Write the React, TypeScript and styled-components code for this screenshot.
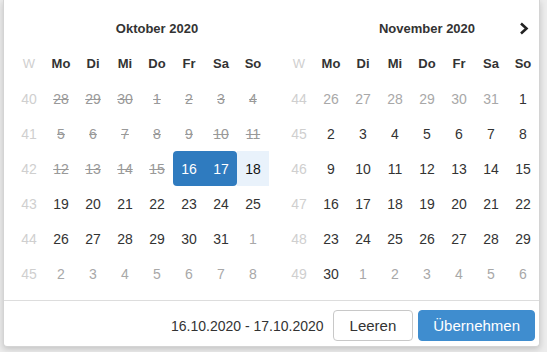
import React from "react";
import styled, { createGlobalStyle } from "styled-components";

const GlobalStyle = createGlobalStyle`
  html, body {
    margin: 0;
    padding: 0;
    background: #ececec;
    font-family: "Liberation Sans", Arial, sans-serif;
  }
`;

const Page = styled.div`
  width: 547px;
  height: 352px;
  overflow: hidden;
  padding-left: 3px;
  box-sizing: border-box;
`;

const Popup = styled.div`
  width: 537px;
  height: 347px;
  box-sizing: border-box;
  background: #fff;
  border: 1px solid #d4d4d4;
  border-top: none;
  border-radius: 0 0 4px 4px;
  box-shadow: 0 2px 6px rgba(0, 0, 0, 0.18);
  display: flex;
  flex-direction: column;
`;

const Calendars = styled.div`
  display: flex;
  gap: 14px;
  padding: 11px 0 9px 9px;
`;

const Month = styled.div`
  display: grid;
  grid-template-columns: repeat(8, 32px);
  grid-auto-rows: 35px;
`;

const TitleRow = styled.div`
  grid-column: 2 / span 7;
  display: flex;
  align-items: center;
  justify-content: center;
  position: relative;
  font-size: 13px;
  font-weight: bold;
  color: #333;
`;

const NextArrow = styled.span`
  position: absolute;
  right: 8px;
  top: 10px;
  width: 14px;
  height: 14px;
  display: flex;
  align-items: center;
  justify-content: center;
`;

const Head = styled.div<{ $week?: boolean }>`
  display: flex;
  align-items: center;
  justify-content: center;
  font-size: 13px;
  font-weight: ${(p) => (p.$week ? "normal" : "bold")};
  color: ${(p) => (p.$week ? "#cfcfcf" : "#333")};
`;

type Kind = "week" | "past" | "other" | "normal" | "start" | "end" | "hover";

const Cell = styled.div<{ $kind: Kind }>`
  display: flex;
  align-items: center;
  justify-content: center;
  font-size: 14px;
  color: ${(p) =>
    p.$kind === "week"
      ? "#cfcfcf"
      : p.$kind === "past"
      ? "#999"
      : p.$kind === "other"
      ? "#a8a8a8"
      : p.$kind === "start" || p.$kind === "end"
      ? "#fff"
      : p.$kind === "hover"
      ? "#111"
      : "#333"};
  text-decoration: ${(p) => (p.$kind === "past" ? "line-through" : "none")};
  background: ${(p) =>
    p.$kind === "start" || p.$kind === "end"
      ? "#2f7bbf"
      : p.$kind === "hover"
      ? "#e9f2fb"
      : "transparent"};
  border-radius: ${(p) =>
    p.$kind === "start" ? "4px 0 0 4px" : p.$kind === "end" ? "0 4px 4px 0" : "0"};
`;

const Footer = styled.div`
  border-top: 1px solid #ddd;
  display: flex;
  align-items: center;
  justify-content: flex-end;
  gap: 5px;
  padding: 9px 4px 4px 0;
`;

const RangeText = styled.span`
  font-size: 14px;
  color: #333;
  margin-right: 4px;
`;

const Button = styled.button<{ $primary?: boolean }>`
  height: 31px;
  box-sizing: border-box;
  padding: 0 ${(p) => (p.$primary ? "14px" : "16px")};
  font-family: "Liberation Sans", Arial, sans-serif;
  font-size: 15px;
  border-radius: 4px;
  border: 1px solid ${(p) => (p.$primary ? "#3f8dcf" : "#c8c8c8")};
  background: ${(p) => (p.$primary ? "#3f8dcf" : "#fff")};
  color: ${(p) => (p.$primary ? "#fff" : "#333")};
  cursor: pointer;
`;

const dayNames = ["Mo", "Di", "Mi", "Do", "Fr", "Sa", "So"];

type MonthData = {
  title: string;
  year: number;
  month: number;
  firstWeek: number;
  next?: boolean;
};

function buildDays(year: number, month: number) {
  const first = new Date(year, month, 1);
  const offset = (first.getDay() + 6) % 7;
  const days: Date[] = [];
  for (let i = 0; i < 42; i++) {
    days.push(new Date(year, month, 1 - offset + i));
  }
  return days;
}

function kindOf(d: Date, month: number): Kind {
  const y = d.getFullYear();
  const m = d.getMonth();
  const day = d.getDate();
  if (y === 2020 && m === 9 && day === 16) return "start";
  if (y === 2020 && m === 9 && day === 17) return "end";
  if (y === 2020 && m === 9 && day === 18 && month === 9) return "hover";
  if (m !== month) {
    if (y === 2020 && (m < 9 || (m === 9 && day < 16))) return "past";
    return "other";
  }
  if (y === 2020 && m === 9 && day < 16) return "past";
  return "normal";
}

function MonthView({ data }: { data: MonthData }) {
  const days = buildDays(data.year, data.month);
  const rows = [0, 1, 2, 3, 4, 5];
  return (
    <Month>
      <TitleRow>
        {data.title}
        {data.next && (
          <NextArrow>
            <svg width="10" height="13" viewBox="0 0 10 13">
              <path d="M2 1.5 L7.5 6.5 L2 11.5" fill="none" stroke="#222" strokeWidth="2.6" />
            </svg>
          </NextArrow>
        )}
      </TitleRow>
      <Head $week>W</Head>
      {dayNames.map((n) => (
        <Head key={n}>{n}</Head>
      ))}
      {rows.map((r) => (
        <React.Fragment key={r}>
          <Cell $kind="week">{data.firstWeek + r}</Cell>
          {days.slice(r * 7, r * 7 + 7).map((d) => (
            <Cell key={d.toISOString()} $kind={kindOf(d, data.month)}>
              {d.getDate()}
            </Cell>
          ))}
        </React.Fragment>
      ))}
    </Month>
  );
}

const months: MonthData[] = [
  { title: "Oktober 2020", year: 2020, month: 9, firstWeek: 40 },
  { title: "November 2020", year: 2020, month: 10, firstWeek: 44, next: true },
];

function App() {
  return (
    <>
      <GlobalStyle />
      <Page>
        <Popup>
          <Calendars>
            {months.map((m) => (
              <MonthView key={m.title} data={m} />
            ))}
          </Calendars>
          <Footer>
            <RangeText>16.10.2020 - 17.10.2020</RangeText>
            <Button>Leeren</Button>
            <Button $primary>Übernehmen</Button>
          </Footer>
        </Popup>
      </Page>
    </>
  );
}

export default App;
